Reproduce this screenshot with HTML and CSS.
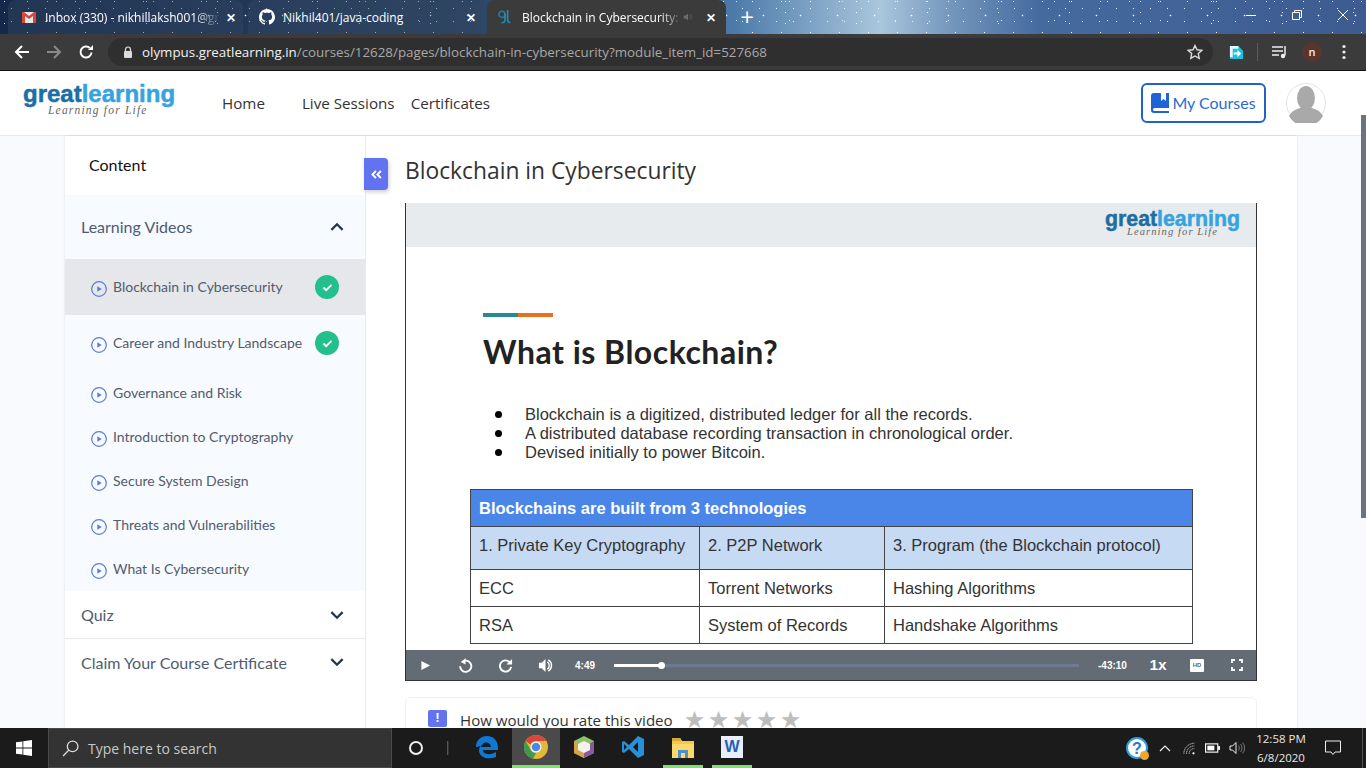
FILE: index.html
```html
<!DOCTYPE html>
<html lang="en">
<head>
  <meta charset="UTF-8">
  <title>Blockchain in Cybersecurity</title>
  <link rel="stylesheet" href="styles.css">
</head>
<body>

  <!-- browser frame -->
  <div class="tabstrip">
    <div class="tab tab-first">
      <svg class="fav" viewBox="0 0 16 16"><rect x="1" y="3" width="14" height="11" fill="#e8e8e8"/><path d="M1 3v11h3V7l4 3 4-3v7h3V3h-2L8 7 3 3z" fill="#d8483a"/></svg>
      <span class="tab-title fade">Inbox (330) - nikhillaksh001@gr</span>
      <span class="tab-x">✕</span>
    </div>
    <div class="tab tab-second">
      <svg class="fav" viewBox="0 0 16 16"><path fill="#fff" d="M8 0C3.6 0 0 3.6 0 8c0 3.5 2.3 6.5 5.5 7.6.4.1.5-.2.5-.4v-1.4c-2.2.5-2.7-1-2.7-1-.4-.9-.9-1.200-.9-1.200-.7-.5.1-.5.1-.5.8.1 1.200.8 1.200.8.7 1.200 1.900.9 2.300.7.1-.5.3-.9.5-1.100-1.800-.2-3.600-.9-3.600-4 0-.9.3-1.600.8-2.100-.1-.2-.4-1 .1-2.100 0 0 .7-.2 2.200.8.6-.2 1.300-.3 2-.3s1.400.1 2 .3c1.500-1 2.200-.8 2.200-.8.4 1.100.2 1.900.1 2.100.5.6.8 1.300.8 2.100 0 3.100-1.900 3.700-3.700 3.900.3.300.6.800.6 1.500v2.200c0 .2.100.5.600.4C13.700 14.500 16 11.500 16 8c0-4.400-3.600-8-8-8z"/></svg>
      <span class="tab-title">Nikhil401/java-coding</span>
      <span class="tab-x">✕</span>
    </div>
    <div class="tab tab-active">
      <svg class="fav fav-gl" viewBox="0 0 16 18"><circle cx="4.500" cy="6" r="3.500" fill="none" stroke="#1f7fa8" stroke-width="1.800"/><path d="M8 5v7c0 2-1.500 3.500-4 3.500M11 1v11c0 2 1 3 3 3.500" fill="none" stroke="#1f8fb8" stroke-width="1.800"/></svg>
      <span class="tab-title fade">Blockchain in Cybersecurity:</span>
      <svg class="tab-sound" viewBox="0 0 14 12"><path d="M1 4h3l3-3v10L4 8H1z" fill="#6c6c6c"/><path d="M9 3l1 3-1 3M11 2l1 4-1 4" fill="none" stroke="#5a5a5a"/></svg>
      <span class="tab-x">✕</span>
    </div>
    <span class="new-tab">+</span>
    <div class="window-btns">
      <svg viewBox="0 0 12 12"><path d="M1 6.500h10" stroke="#fff"/></svg>
      <svg viewBox="0 0 12 12"><path d="M1.500 3.500h7v7h-7zM3.500 3.500v-2h7v7h-2" fill="none" stroke="#fff"/></svg>
      <svg viewBox="0 0 12 12"><path d="M1 1l10 10M11 1L1 11" stroke="#fff"/></svg>
    </div>
  </div>

  <div class="toolbar">
    <svg class="tool" viewBox="0 0 16 16"><path d="M15 8H2M8 2L2 8l6 6" fill="none" stroke="#fff" stroke-width="2"/></svg>
    <svg class="tool" viewBox="0 0 16 16"><path d="M1 8h13M8 2l6 6-6 6" fill="none" stroke="#8a8a8a" stroke-width="2"/></svg>
    <svg class="tool" viewBox="0 0 16 16"><path d="M13.500 8.500A5.500 5.500 0 1 1 11.800 4" fill="none" stroke="#fff" stroke-width="2"/><path d="M10 6h5V1z" fill="#fff"/></svg>
    <div class="omnibox">
      <svg class="lock" viewBox="0 0 10 12"><path d="M2.500 5V3.500a2.500 2.500 0 0 1 5 0V5" fill="none" stroke="#ddd" stroke-width="1.200"/><rect x="1" y="5" width="8" height="7" rx="1" fill="#ddd"/></svg>
      <span class="url"><b>olympus.greatlearning.in</b>/courses/12628/pages/blockchain-in-cybersecurity?module_item_id=527668</span>
      <svg class="star-btn" viewBox="0 0 16 16"><path d="M8 1.500l2 4.300 4.700.6-3.400 3.200.9 4.700L8 12l-4.200 2.300.9-4.700L1.300 6.400 6 5.800z" fill="none" stroke="#ddd" stroke-width="1.400"/></svg>
    </div>
    <svg class="ext" viewBox="0 0 16 16"><path d="M1 1h9l5 5v9H1z" fill="#1cc0dc"/><path d="M1 1h9v3H4v9H1z" fill="#e8f8fb"/><path d="M5 8h4V5l4 4-4 4v-3H5z" fill="#fff"/></svg>
    <span class="tool-sep"></span>
    <svg class="media" viewBox="0 0 16 14"><path d="M0 2h11M0 6h11M0 10h7" stroke="#eee" stroke-width="1.500"/><path d="M13 1v9.500" stroke="#eee" stroke-width="1.500"/><circle cx="11" cy="11" r="2.200" fill="#eee"/></svg>
    <span class="profile">n</span>
    <svg class="dots" viewBox="0 0 4 16"><circle cx="2" cy="2.500" r="1.600" fill="#eee"/><circle cx="2" cy="8" r="1.600" fill="#eee"/><circle cx="2" cy="13.500" r="1.600" fill="#eee"/></svg>
  </div>

  <!-- site -->
  <div class="page">
    <header class="site-header">
      <div class="logo">
        <div class="logo-word"><span class="great">great</span><span class="learning">learning</span></div>
        <div class="logo-tag">Learning for Life</div>
      </div>
      <nav class="nav">
        <a class="nav-home">Home</a>
        <a class="nav-live">Live Sessions</a>
        <a>Certificates</a>
      </nav>
      <a class="my-courses">
        <svg viewBox="0 0 18 20"><path d="M3 0h15v15H3.500a1.500 1.500 0 0 0 0 3H18v2H3a3 3 0 0 1-3-3V3a3 3 0 0 1 3-3z" fill="#1f63d6"/><path d="M10 0h5v8l-2.500-2L10 8z" fill="#fff"/></svg>
        My Courses
      </a>
      <div class="avatar">
        <svg viewBox="0 0 40 40"><circle cx="20" cy="20" r="19.500" fill="#fff" stroke="#e4e4e4"/><ellipse cx="20" cy="15" rx="9" ry="12" fill="#a9a9a9"/><path d="M3 33c3-6 9-7 13-9h8c4 2 10 3 13 9a19.500 19.500 0 0 1-34 0z" fill="#a9a9a9"/></svg>
      </div>
    </header>

    <div class="layout">
      <aside class="sidebar">
        <div class="side-title">Content</div>
        <div class="section-head open">
          <span>Learning Videos</span>
          <svg class="chev" viewBox="0 0 12 8"><path d="M1 7l5-5 5 5" fill="none" stroke="#26344d" stroke-width="2"/></svg>
        </div>
        <ul class="lessons">
          <li class="lesson current">
            <svg class="play-ic" viewBox="0 0 16 16"><circle cx="8" cy="8" r="7.300" fill="none" stroke="#5a7bd8" stroke-width="1.200"/><path d="M6.300 5.300l4.400 2.700-4.400 2.700z" fill="#5a7bd8"/></svg>
            <span class="lesson-name">Blockchain in Cybersecurity</span>
            <span class="done"><svg viewBox="0 0 12 10"><path d="M1.500 5l3 3 6-6" fill="none" stroke="#fff" stroke-width="2"/></svg></span>
          </li>
          <li class="lesson second">
            <svg class="play-ic" viewBox="0 0 16 16"><circle cx="8" cy="8" r="7.300" fill="none" stroke="#5a7bd8" stroke-width="1.200"/><path d="M6.300 5.300l4.400 2.700-4.400 2.700z" fill="#5a7bd8"/></svg>
            <span class="lesson-name">Career and Industry Landscape</span>
            <span class="done"><svg viewBox="0 0 12 10"><path d="M1.500 5l3 3 6-6" fill="none" stroke="#fff" stroke-width="2"/></svg></span>
          </li>
          <li class="lesson">
            <svg class="play-ic" viewBox="0 0 16 16"><circle cx="8" cy="8" r="7.300" fill="none" stroke="#5a7bd8" stroke-width="1.200"/><path d="M6.300 5.300l4.400 2.700-4.400 2.700z" fill="#5a7bd8"/></svg>
            <span class="lesson-name">Governance and Risk</span>
          </li>
          <li class="lesson">
            <svg class="play-ic" viewBox="0 0 16 16"><circle cx="8" cy="8" r="7.300" fill="none" stroke="#5a7bd8" stroke-width="1.200"/><path d="M6.300 5.300l4.400 2.700-4.400 2.700z" fill="#5a7bd8"/></svg>
            <span class="lesson-name">Introduction to Cryptography</span>
          </li>
          <li class="lesson">
            <svg class="play-ic" viewBox="0 0 16 16"><circle cx="8" cy="8" r="7.300" fill="none" stroke="#5a7bd8" stroke-width="1.200"/><path d="M6.300 5.300l4.400 2.700-4.400 2.700z" fill="#5a7bd8"/></svg>
            <span class="lesson-name">Secure System Design</span>
          </li>
          <li class="lesson">
            <svg class="play-ic" viewBox="0 0 16 16"><circle cx="8" cy="8" r="7.300" fill="none" stroke="#5a7bd8" stroke-width="1.200"/><path d="M6.300 5.300l4.400 2.700-4.400 2.700z" fill="#5a7bd8"/></svg>
            <span class="lesson-name">Threats and Vulnerabilities</span>
          </li>
          <li class="lesson">
            <svg class="play-ic" viewBox="0 0 16 16"><circle cx="8" cy="8" r="7.300" fill="none" stroke="#5a7bd8" stroke-width="1.200"/><path d="M6.300 5.300l4.400 2.700-4.400 2.700z" fill="#5a7bd8"/></svg>
            <span class="lesson-name">What Is Cybersecurity</span>
          </li>
        </ul>
        <div class="section-head closed quiz">
          <span>Quiz</span>
          <svg class="chev" viewBox="0 0 12 8"><path d="M1 1l5 5 5-5" fill="none" stroke="#26344d" stroke-width="2"/></svg>
        </div>
        <div class="section-head closed claim">
          <span>Claim Your Course Certificate</span>
          <svg class="chev" viewBox="0 0 12 8"><path d="M1 1l5 5 5-5" fill="none" stroke="#26344d" stroke-width="2"/></svg>
        </div>
      </aside>

      <main class="content">
        <button class="collapse"><svg viewBox="0 0 10 8"><path d="M4.500 .8L1.300 4l3.200 3.200M9 .8L5.800 4 9 7.200" fill="none" stroke="#fff" stroke-width="1.700"/></svg></button>
        <h1 class="page-title">Blockchain in Cybersecurity</h1>

        <div class="video">
          <div class="slide-top">
            <div class="logo logo-small">
              <div class="logo-word"><span class="great">great</span><span class="learning">learning</span></div>
              <div class="logo-tag">Learning for Life</div>
            </div>
          </div>
          <div class="slide">
            <div class="slide-rule"></div>
            <h2 class="slide-title">What is Blockchain?</h2>
            <ul class="slide-points">
              <li>Blockchain is a digitized, distributed ledger for all the records.</li>
              <li>A distributed database recording transaction in chronological order.</li>
              <li>Devised initially to power Bitcoin.</li>
            </ul>
            <table class="slide-table">
              <colgroup><col class="c1"><col class="c2"><col class="c3"></colgroup>
              <tr class="row-title"><th colspan="3">Blockchains are built from 3 technologies</th></tr>
              <tr class="row-sub"><td>1. Private Key Cryptography</td><td>2. P2P Network</td><td>3. Program (the Blockchain protocol)</td></tr>
              <tr><td>ECC</td><td>Torrent Networks</td><td>Hashing Algorithms</td></tr>
              <tr><td>RSA</td><td>System of Records</td><td>Handshake Algorithms</td></tr>
            </table>
          </div>
          <div class="controls">
            <svg class="ctl ctl-play" viewBox="0 0 12 12"><path d="M1.500 1l9.500 5-9.500 5z" fill="#fff"/></svg>
            <svg class="ctl ctl-back" viewBox="0 0 16 16"><path d="M4 4.500a6 6 0 1 1-1.800 4.300" fill="none" stroke="#fff" stroke-width="2"/><path d="M8 0v7L3.500 4.500z" fill="#fff"/></svg>
            <svg class="ctl ctl-fwd" viewBox="0 0 16 16"><path d="M12.500 4.500a6 6 0 1 0 1.500 5" fill="none" stroke="#fff" stroke-width="2"/><path d="M15 1v6H9z" fill="#fff"/></svg>
            <svg class="ctl ctl-vol" viewBox="0 0 16 16"><path d="M1 5h3l4-4v14l-4-4H1z" fill="#fff"/><path d="M10 4a5 5 0 0 1 0 8M11 2a7 7 0 0 1 0 12" fill="none" stroke="#fff" stroke-width="1.500"/></svg>
            <span class="time">4:49</span>
            <div class="progress"><div class="progress-fill" style="width: 47px"></div><span class="progress-dot"></span></div>
            <span class="time time-left">-43:10</span>
            <span class="speed">1x</span>
            <span class="hd">HD</span>
            <svg class="ctl ctl-full" viewBox="0 0 12 12"><path d="M1 4V1h3M8 1h3v3M11 8v3H8M4 11H1V8" fill="none" stroke="#fff" stroke-width="1.800"/></svg>
          </div>
        </div>

        <div class="rating">
          <span class="rating-ic">!</span>
          <span class="rating-text">How would you rate this video</span>
          <span class="rating-stars">★★★★★</span>
        </div>
      </main>
    </div>

    <div class="scrollbar"><span class="scroll-thumb"></span></div>
  </div>

  <!-- windows taskbar -->
  <footer class="taskbar">
    <div class="start">
      <svg viewBox="0 0 16 16"><path d="M0 2.300L6.500 1.400v6.200H0zM7.300 1.300L16 0v7.600H7.300zM0 8.400h6.500v6.200L0 13.700zM7.300 8.400H16V16l-8.700-1.200z" fill="#fff"/></svg>
    </div>
    <div class="search">
      <svg viewBox="0 0 16 16"><circle cx="10" cy="6" r="5" fill="none" stroke="#ddd" stroke-width="1.200"/><path d="M6.300 9.700L1 15" stroke="#ddd" stroke-width="1.200"/></svg>
      <span>Type here to search</span>
    </div>
    <div class="task-icons">
      <span class="cortana"></span>
      <span class="task-sep"></span>
      <span class="task task-edge">
        <svg viewBox="0 0 24 24"><path d="M1 12C1 5 6 1 12 1c7 0 11 5 11 12v2H8c0 4 6 6 13 2v5c-8 3-16 1-17-6 0-3 1-5 3-7-1 2-1 3-1 3h10c0-4-6-6-8-3-1 1-5 3-6 3z" fill="#0f78d4"/></svg>
      </span>
      <span class="task task-chrome">
        <svg viewBox="0 0 24 24"><circle cx="12" cy="12" r="12" fill="#e0b93a"/><path d="M12 0a12 12 0 0 1 10.400 6H12a6 6 0 0 0-5.500 3.500L1.600 6A12 12 0 0 1 12 0z" fill="#d8473a"/><path d="M1.600 6l5 8.800A6 6 0 0 0 12 18l-3 5.700A12 12 0 0 1 1.600 6z" fill="#3f9a4f"/><circle cx="12" cy="12" r="5.500" fill="#fff"/><circle cx="12" cy="12" r="4.300" fill="#4a88e8"/></svg>
      </span>
      <span class="task task-bean">
        <svg viewBox="0 0 24 24"><path d="M12 1l10 5v12l-10 5-10-5V6z" fill="#8fc06a"/><path d="M12 12l10-6v12l-10 5z" fill="#8a5a9c"/><path d="M12 12L2 6v12l10 5z" fill="#d4a64a"/><path d="M12 6l6 3v6l-6 3-6-3V9z" fill="#f4f2ec"/></svg>
      </span>
      <span class="task task-vs">
        <svg viewBox="0 0 24 24"><path d="M17 1l6 3v16l-6 3-9-9-5 4-2-1V7l2-1 5 4z" fill="#2a8fd6"/><path d="M17 7l-5 5 5 5z" fill="#1a1a1a"/><path d="M3 9v6l3-3z" fill="#1a1a1a"/></svg>
      </span>
      <span class="task task-folder">
        <svg viewBox="0 0 24 24"><path d="M1 3h8l2 3h12v17H1z" fill="#f2c84f"/><path d="M1 3h8l2 3H1z" fill="#d9a93a"/><rect x="1" y="9" width="22" height="14" fill="#fbd96b"/><rect x="7" y="15" width="10" height="8" fill="#4a8fd0"/><rect x="10" y="18" width="4" height="5" fill="#fbd96b"/></svg>
      </span>
      <span class="task task-word">
        <span class="word-sheet">W</span>
      </span>
    </div>
    <div class="tray">
      <span class="help-ic">?<i></i></span>
      <svg class="tray-chev" viewBox="0 0 12 7"><path d="M1 6l5-5 5 5" fill="none" stroke="#eee" stroke-width="1.200"/></svg>
      <svg class="tray-wifi" viewBox="0 0 16 14"><path d="M1 13A12 12 0 0 1 13 1M4 13a9 9 0 0 1 9-9M7 13a6 6 0 0 1 6-6" fill="none" stroke="#ddd" stroke-dasharray="1.500 .7"/><circle cx="12" cy="12.500" r="1.300" fill="#fff"/></svg>
      <svg class="tray-bat" viewBox="0 0 16 10"><rect x=".6" y=".6" width="13" height="8.800" fill="none" stroke="#fff" stroke-width="1.200"/><rect x="2.500" y="2.500" width="7.500" height="5" fill="#fff"/><rect x="14" y="3" width="2" height="4" fill="#fff"/></svg>
      <svg class="tray-vol" viewBox="0 0 16 14"><path d="M1 5h2.500L7 1.500v11L3.500 9H1z" fill="none" stroke="#eee"/><path d="M9.500 4.500a4 4 0 0 1 0 5M11.500 3a6 6 0 0 1 0 8M13.500 1.500a8 8 0 0 1 0 11" fill="none" stroke="#777"/></svg>
      <div class="clock"><div>12:58 PM</div><div>6/8/2020</div></div>
      <svg class="notify" viewBox="0 0 16 16"><path d="M.5 1h15v11h-5.500L8 14.500 6 12H.5z" fill="none" stroke="#eee"/></svg>
      <span class="show-desktop"></span>
    </div>
  </footer>

</body>
</html>
```

FILE: styles.css
```css
* {
  box-sizing: border-box;
}

html, body {
  height: 100%;
}

body {
  margin: 0;
  height: 768px;
  width: 1366px;
  overflow: hidden;
  display: flex;
  flex-direction: column;
  font-family: "Lato", sans-serif;
  background-color: #f8fafd;
}

/* tab strip */
.tabstrip {
  height: 34px;
  flex: none;
  display: flex;
  align-items: flex-end;
  color: #fff;
  font-family: "Open Sans", sans-serif;
  font-size: 12px;
  background-color: #2d4868;
  background-image:
    radial-gradient(circle, #fff 0.7px, transparent 1.1px),
    radial-gradient(circle, #dfe8f5 0.6px, transparent 1px),
    radial-gradient(circle, #fff 0.5px, transparent 1px),
    radial-gradient(circle, #eef3fa 0.6px, transparent 1px),
    radial-gradient(circle, #fff 0.5px, transparent 0.9px),
    linear-gradient(90deg, #14294a 0, #2b4464 470px, #4a79a8 730px, #a9c6dc 880px, #7497bd 950px, #456a9e 1040px, #3d5b90 1366px);
  background-size: 37px 23px, 53px 19px, 29px 31px, 17px 13px, 71px 11px, 100% 100%;
  background-position: 5px 4px, 21px 11px, 13px 17px, 3px 2px, 40px 7px, 0 0;
}

.tab {
  height: 34px;
  display: flex;
  align-items: center;
}

.tab-first {
  width: 235px;
  margin-left: 8px;
  margin-right: 5px;
  padding: 0 7px 0 13px;
  background-color: rgba(50, 70, 98, 0.45);
  border-radius: 8px 8px 0 0;
}

.tab-second {
  width: 232px;
  margin-right: 7px;
  padding: 0 4px 0 11px;
  background-color: rgba(50, 70, 98, 0.45);
  border-radius: 8px 8px 0 0;
}

.tab-active {
  width: 239px;
  padding: 0 10px 0 11px;
  background-color: #3b3b3b;
  border-radius: 8px 8px 0 0;
}

.fav {
  width: 16px;
  height: 16px;
  flex: none;
  margin-right: 8px;
}

.fav-gl {
  width: 14px;
  margin-right: 10px;
}

.tab-title {
  flex: 1;
  white-space: nowrap;
}

.fade {
  -webkit-mask-image: linear-gradient(90deg, #000 86%, transparent 100%);
  mask-image: linear-gradient(90deg, #000 86%, transparent 100%);
}

.tab-sound {
  width: 10px;
  height: 10px;
  margin-right: 7px;
}

.tab-x {
  font-size: 12px;
  font-weight: bold;
  margin-left: 6px;
}

.new-tab {
  margin: 0 0 2px 9px;
  font-size: 24px;
  line-height: 30px;
  width: 24px;
  text-align: center;
}

.window-btns {
  margin-left: auto;
  display: flex;
  align-self: flex-start;
  gap: 34px;
  padding: 9px 17px 0 0;
}

.window-btns svg {
  width: 12px;
  height: 12px;
}

/* toolbar */
.toolbar {
  height: 37px;
  flex: none;
  display: flex;
  align-items: center;
  padding: 0 0 0 14px;
  background-color: #3b3b3b;
  border-bottom: 1px solid #111;
}

.tool {
  width: 16px;
  height: 16px;
  margin-right: 16px;
}

.omnibox {
  width: 1105px;
  height: 28px;
  margin-left: -2px;
  display: flex;
  align-items: center;
  padding: 0 10px 0 15px;
  border-radius: 14px;
  background-color: #2f2f2f;
}

.lock {
  width: 10px;
  height: 12px;
  margin-right: 9px;
}

.url {
  flex: 1;
  font-family: "Open Sans", sans-serif;
  font-size: 13.350px;
  color: #a8a8a8;
  white-space: nowrap;
}

.url b {
  font-weight: 400;
  color: #f1f1f1;
}

.star-btn {
  width: 16px;
  height: 16px;
}

.ext {
  width: 15px;
  height: 15px;
  margin-left: 16px;
}

.tool-sep {
  width: 1px;
  height: 18px;
  margin: 0 14px 0 13px;
  background-color: #5c5c5c;
}

.media {
  width: 16px;
  height: 14px;
}

.profile {
  width: 20px;
  height: 20px;
  margin-left: 14px;
  border-radius: 50%;
  background-color: #5a3530;
  color: #eee;
  font-family: "Open Sans", sans-serif;
  font-size: 11px;
  font-weight: 600;
  line-height: 19px;
  text-align: center;
}

.dots {
  width: 4px;
  height: 16px;
  margin-left: 20px;
}

/* site */
.page {
  flex: 1;
  min-height: 0;
  display: flex;
  flex-direction: column;
  position: relative;
  overflow: hidden;
}

.site-header {
  height: 65px;
  flex: none;
  display: flex;
  align-items: center;
  padding: 0 40px 0 23px;
  background-color: #fff;
  border-bottom: 1px solid #e6e8ea;
}

.logo {
  width: 152px;
  flex: none;
  margin-bottom: 5px;
}

.logo-word {
  font-family: "Liberation Sans", sans-serif;
  font-size: 24px;
  font-weight: 700;
  line-height: 18px;
  -webkit-text-stroke: 0.5px;
  white-space: nowrap;
}

.great {
  color: #1c6ea4;
}

.learning {
  color: #36a3de;
}

.logo-tag {
  margin: 1px 0 0 25px;
  font-family: "Liberation Serif", serif;
  font-style: italic;
  font-size: 11.500px;
  line-height: 12px;
  letter-spacing: 1.200px;
  color: #666;
  white-space: nowrap;
}

.nav {
  display: flex;
  margin: 0 0 1px 47px;
  font-family: "Open Sans", sans-serif;
  font-size: 15.200px;
  color: #333;
}

.nav-home {
  margin-right: 37px;
}

.nav-live {
  margin-right: 16px;
}

.my-courses {
  margin-left: auto;
  width: 125px;
  height: 40px;
  padding-bottom: 1px;
  display: flex;
  align-items: center;
  justify-content: center;
  gap: 3px;
  border: 2px solid #1f63c4;
  border-radius: 6px;
  color: #2a6bd0;
  font-size: 16px;
}

.my-courses svg {
  width: 18px;
  height: 20px;
}

.avatar {
  width: 40px;
  height: 40px;
  margin-left: 20px;
}

.avatar svg {
  display: block;
  width: 40px;
  height: 40px;
}

.layout {
  flex: 1;
  min-height: 0;
  display: flex;
  width: 1232px;
  margin-left: 65px;
  background-color: #fff;
  box-shadow: 0 0 2px rgba(0, 0, 0, 0.12);
}

/* sidebar */
.sidebar {
  width: 301px;
  flex: none;
  background-color: #fff;
  border-right: 1px solid #e8eaee;
}

.side-title {
  height: 59px;
  padding: 19px 0 0 24px;
  font-size: 16px;
  line-height: 20px;
  color: #111;
}

.section-head {
  display: flex;
  align-items: center;
  justify-content: space-between;
  padding: 0 21px 0 16px;
  font-size: 16px;
  color: #4d5c75;
  background-color: #fff;
}

.section-head.open {
  height: 64px;
  padding-bottom: 2px;
  background-color: #f7faff;
}

.section-head.closed {
  height: 48px;
}

.section-head.quiz {
  border-bottom: 1px solid #e6e8ec;
}

.section-head.claim {
  padding-bottom: 2px;
}

.closed .chev {
  margin-top: 1px;
}

.chev {
  width: 14px;
  height: 9px;
}

.lessons {
  list-style: none;
  margin: 0;
  padding: 0;
  background-color: #f7faff;
}

.lesson {
  height: 44px;
  display: flex;
  align-items: center;
  padding: 0 26px;
  font-size: 14px;
  color: #525c6c;
  white-space: nowrap;
}

.lesson.current {
  height: 56px;
  background-color: #e5e7eb;
}

.lesson.second {
  height: 56px;
}

.lesson-name {
  margin-bottom: 2px;
}

.play-ic {
  width: 16px;
  height: 16px;
  flex: none;
  margin-right: 6px;
  margin-top: 3px;
}

.done {
  margin-left: auto;
  width: 24px;
  height: 24px;
  display: flex;
  align-items: center;
  justify-content: center;
  border-radius: 50%;
  background-color: #23c08e;
}

.done svg {
  width: 11px;
  height: 9px;
}

/* content */
.content {
  flex: 1;
  min-width: 0;
  position: relative;
  padding-left: 39px;
}

.collapse {
  position: absolute;
  left: -2px;
  top: 22px;
  width: 24px;
  height: 32px;
  padding: 0;
  display: flex;
  align-items: center;
  justify-content: center;
  border: none;
  border-radius: 0 4px 4px 0;
  background-color: #6272f0;
  box-shadow: 1px 2px 4px rgba(0, 0, 0, 0.2);
}

.collapse svg {
  width: 11px;
  height: 9px;
}

.page-title {
  height: 67px;
  margin: 0;
  padding-top: 17px;
  font-family: "Open Sans", sans-serif;
  font-size: 22.800px;
  font-weight: 400;
  line-height: 36px;
  color: #333;
}

.video {
  width: 852px;
  height: 478px;
  display: flex;
  flex-direction: column;
  border: 1px solid #333;
  border-top: none;
}

.slide-top {
  height: 44px;
  flex: none;
  display: flex;
  justify-content: flex-end;
  align-items: flex-start;
  padding: 8px 16px 0 0;
  background-color: #e8ebed;
}

.logo-small {
  width: 135px;
  margin-bottom: 0;
}

.logo-small .logo-word {
  font-size: 21.300px;
  line-height: 16px;
}

.logo-small .logo-tag {
  margin: 0 0 0 22px;
  font-size: 10.500px;
  line-height: 10px;
  letter-spacing: 1.100px;
}

.slide {
  flex: 1;
  min-height: 0;
  padding: 66px 0 0 64px;
  background-color: #fff;
}

.slide-rule {
  width: 70px;
  height: 4px;
  margin-left: 13px;
  background: linear-gradient(90deg, #268a90 50%, #e8701f 50%);
}

.slide-title {
  margin: 15px 0 0 13px;
  font-family: "Lato", sans-serif;
  font-size: 32px;
  font-weight: 700;
  line-height: 40px;
  letter-spacing: 0.5px;
  color: #222;
}

.slide-points {
  list-style: none;
  margin: 33px 0 0 0;
  padding: 0 0 0 25px;
  font-family: "Liberation Sans", sans-serif;
  font-size: 16.500px;
  line-height: 19px;
  color: #333;
}

.slide-points li {
  display: flex;
  align-items: center;
}

.slide-points li::before {
  content: "";
  width: 7px;
  height: 7px;
  margin-right: 23px;
  border-radius: 50%;
  background-color: #000;
}

.slide-table {
  width: 723px;
  margin-top: 27px;
  table-layout: fixed;
  border-collapse: collapse;
  font-family: "Liberation Sans", sans-serif;
  font-size: 16.500px;
  color: #333;
}

.c1 {
  width: 229px;
}

.c2 {
  width: 185px;
}

.slide-table td, .slide-table th {
  height: 37px;
  padding: 0 0 0 8px;
  border: 1px solid #444;
  text-align: left;
  white-space: nowrap;
}

.row-title th {
  background-color: #4a86e8;
  color: #fff;
  font-weight: bold;
}

.slide-table .row-sub td {
  height: 43px;
  padding-bottom: 5px;
  background-color: #c6daf4;
}

.controls {
  height: 30px;
  flex: none;
  display: flex;
  align-items: center;
  background-color: #636b74;
  color: #fff;
}

.ctl {
  flex: none;
}

.ctl-play {
  width: 11px;
  height: 11px;
  margin-left: 14px;
}

.ctl-back, .ctl-fwd, .ctl-vol {
  width: 15px;
  height: 15px;
}

.ctl-back {
  margin-left: 27px;
}

.ctl-fwd {
  margin-left: 25px;
}

.ctl-vol {
  margin-left: 25px;
}

.time {
  width: 22px;
  margin-left: 22px;
  font-family: "Liberation Sans", sans-serif;
  font-size: 10px;
  font-weight: bold;
  white-space: nowrap;
}

.progress {
  width: 465px;
  height: 3px;
  margin-left: 17px;
  position: relative;
  background-color: #6d7a90;
}

.progress-fill {
  height: 3px;
  background-color: #fff;
}

.progress-dot {
  position: absolute;
  left: 44px;
  top: -2px;
  width: 7px;
  height: 7px;
  border-radius: 50%;
  background-color: #fff;
}

.time-left {
  width: 30px;
  margin-left: 19px;
}

.speed {
  width: 20px;
  margin-left: 20px;
  font-family: "Liberation Sans", sans-serif;
  font-size: 15.500px;
  font-weight: bold;
  text-align: center;
}

.hd {
  width: 14px;
  height: 13px;
  margin-left: 22px;
  background-color: #fff;
  border-radius: 1px;
  color: #636b74;
  font-family: "Liberation Sans", sans-serif;
  font-size: 6px;
  font-weight: bold;
  line-height: 13px;
  text-align: center;
}

.ctl-full {
  width: 12px;
  height: 12px;
  margin-left: 27px;
}

.rating {
  width: 852px;
  height: 60px;
  margin-top: 16px;
  padding: 12px 0 0 22px;
  display: flex;
  align-items: flex-start;
  border: 1px solid #f0f0f0;
  border-radius: 6px;
  font-family: "Open Sans", sans-serif;
  font-size: 15.100px;
  color: #333;
}

.rating-ic {
  width: 19px;
  height: 17px;
  margin-right: 13px;
  border-radius: 2px;
  background-color: #6272f0;
  color: #fff;
  font-size: 12px;
  font-weight: bold;
  line-height: 16px;
  text-align: center;
}

.rating-text {
  line-height: 20px;
}

.rating-stars {
  margin: -2px 0 0 11px;
  font-family: "DejaVu Sans", sans-serif;
  font-size: 24px;
  line-height: 24px;
  letter-spacing: 2.500px;
  color: #bdbdbd;
  white-space: nowrap;
}

.scrollbar {
  position: absolute;
  right: 0;
  top: 0;
  width: 5px;
  height: 100%;
}

.scroll-thumb {
  position: absolute;
  top: 44px;
  left: 0;
  width: 5px;
  height: 403px;
  background-color: #6b7280;
}

/* taskbar */
.taskbar {
  height: 40px;
  flex: none;
  display: flex;
  align-items: stretch;
  background-color: #1b1b1b;
  color: #fff;
}

.start {
  width: 48px;
  display: flex;
  align-items: center;
  justify-content: center;
}

.start svg {
  width: 16px;
  height: 16px;
}

.search {
  width: 344px;
  display: flex;
  align-items: center;
  padding-left: 13px;
  background-color: #333;
  border: 1px solid #4a4a4a;
  color: #c8c8c8;
  font-family: "Open Sans", sans-serif;
  font-size: 14px;
}

.search svg {
  width: 17px;
  height: 17px;
  margin-right: 9px;
}

.task-icons {
  display: flex;
  align-items: stretch;
}

.cortana {
  width: 14px;
  height: 14px;
  margin: 13px 0 0 17px;
  border: 2px solid #eee;
  border-radius: 50%;
}

.task-sep {
  width: 2px;
  height: 14px;
  margin: 13px 14px 0 24px;
  border-left: 1px solid #555;
  border-right: 1px solid #333;
}

.task {
  display: flex;
  align-items: center;
  justify-content: center;
  width: 48px;
  border-bottom: 3px solid transparent;
}

.task svg {
  width: 24px;
  height: 24px;
}

.task-edge {
  margin-right: 1px;
}

.task-chrome {
  background-color: #4a4a4a;
  border-bottom-color: #7fe070;
}

.task-vs {
  margin-left: 1px;
}

.task-folder {
  width: 40px;
  margin: 0 9px 0 6px;
  border-bottom-color: #7fe070;
}

.task-word {
  width: 40px;
  border-bottom-color: #7fe070;
}

.word-sheet {
  width: 22px;
  height: 22px;
  background-color: #e8eefb;
  color: #2a5eb5;
  font-family: "Liberation Sans", sans-serif;
  font-size: 16px;
  font-weight: bold;
  line-height: 22px;
  text-align: center;
}

.tray {
  margin-left: auto;
  display: flex;
  align-items: center;
  padding-right: 3px;
}

.help-ic {
  width: 22px;
  height: 22px;
  position: relative;
  border: 2px solid #2f9be0;
  border-radius: 50%;
  background-color: #fff;
  color: #1c7cc8;
  font-family: "Liberation Sans", sans-serif;
  font-size: 16px;
  font-weight: bold;
  line-height: 19px;
  text-align: center;
}

.help-ic i {
  position: absolute;
  right: -3px;
  bottom: -3px;
  width: 9px;
  height: 9px;
  border-radius: 50%;
  background-color: #f0a52c;
}

.tray-chev {
  width: 12px;
  height: 7px;
  margin-left: 11px;
}

.tray-wifi {
  width: 14px;
  height: 13px;
  margin-left: 12px;
}

.tray-bat {
  width: 15px;
  height: 10px;
  margin-left: 8px;
}

.tray-vol {
  width: 16px;
  height: 14px;
  margin-left: 9px;
}

.clock {
  width: 60px;
  margin-left: 6px;
  font-family: "Open Sans", sans-serif;
  font-size: 11.500px;
  line-height: 19px;
  text-align: center;
  color: #e8e8e8;
}

.notify {
  width: 16px;
  height: 16px;
  margin-left: 14px;
}

.show-desktop {
  align-self: stretch;
  width: 1px;
  margin-left: 21px;
  background-color: #555;
}
```
